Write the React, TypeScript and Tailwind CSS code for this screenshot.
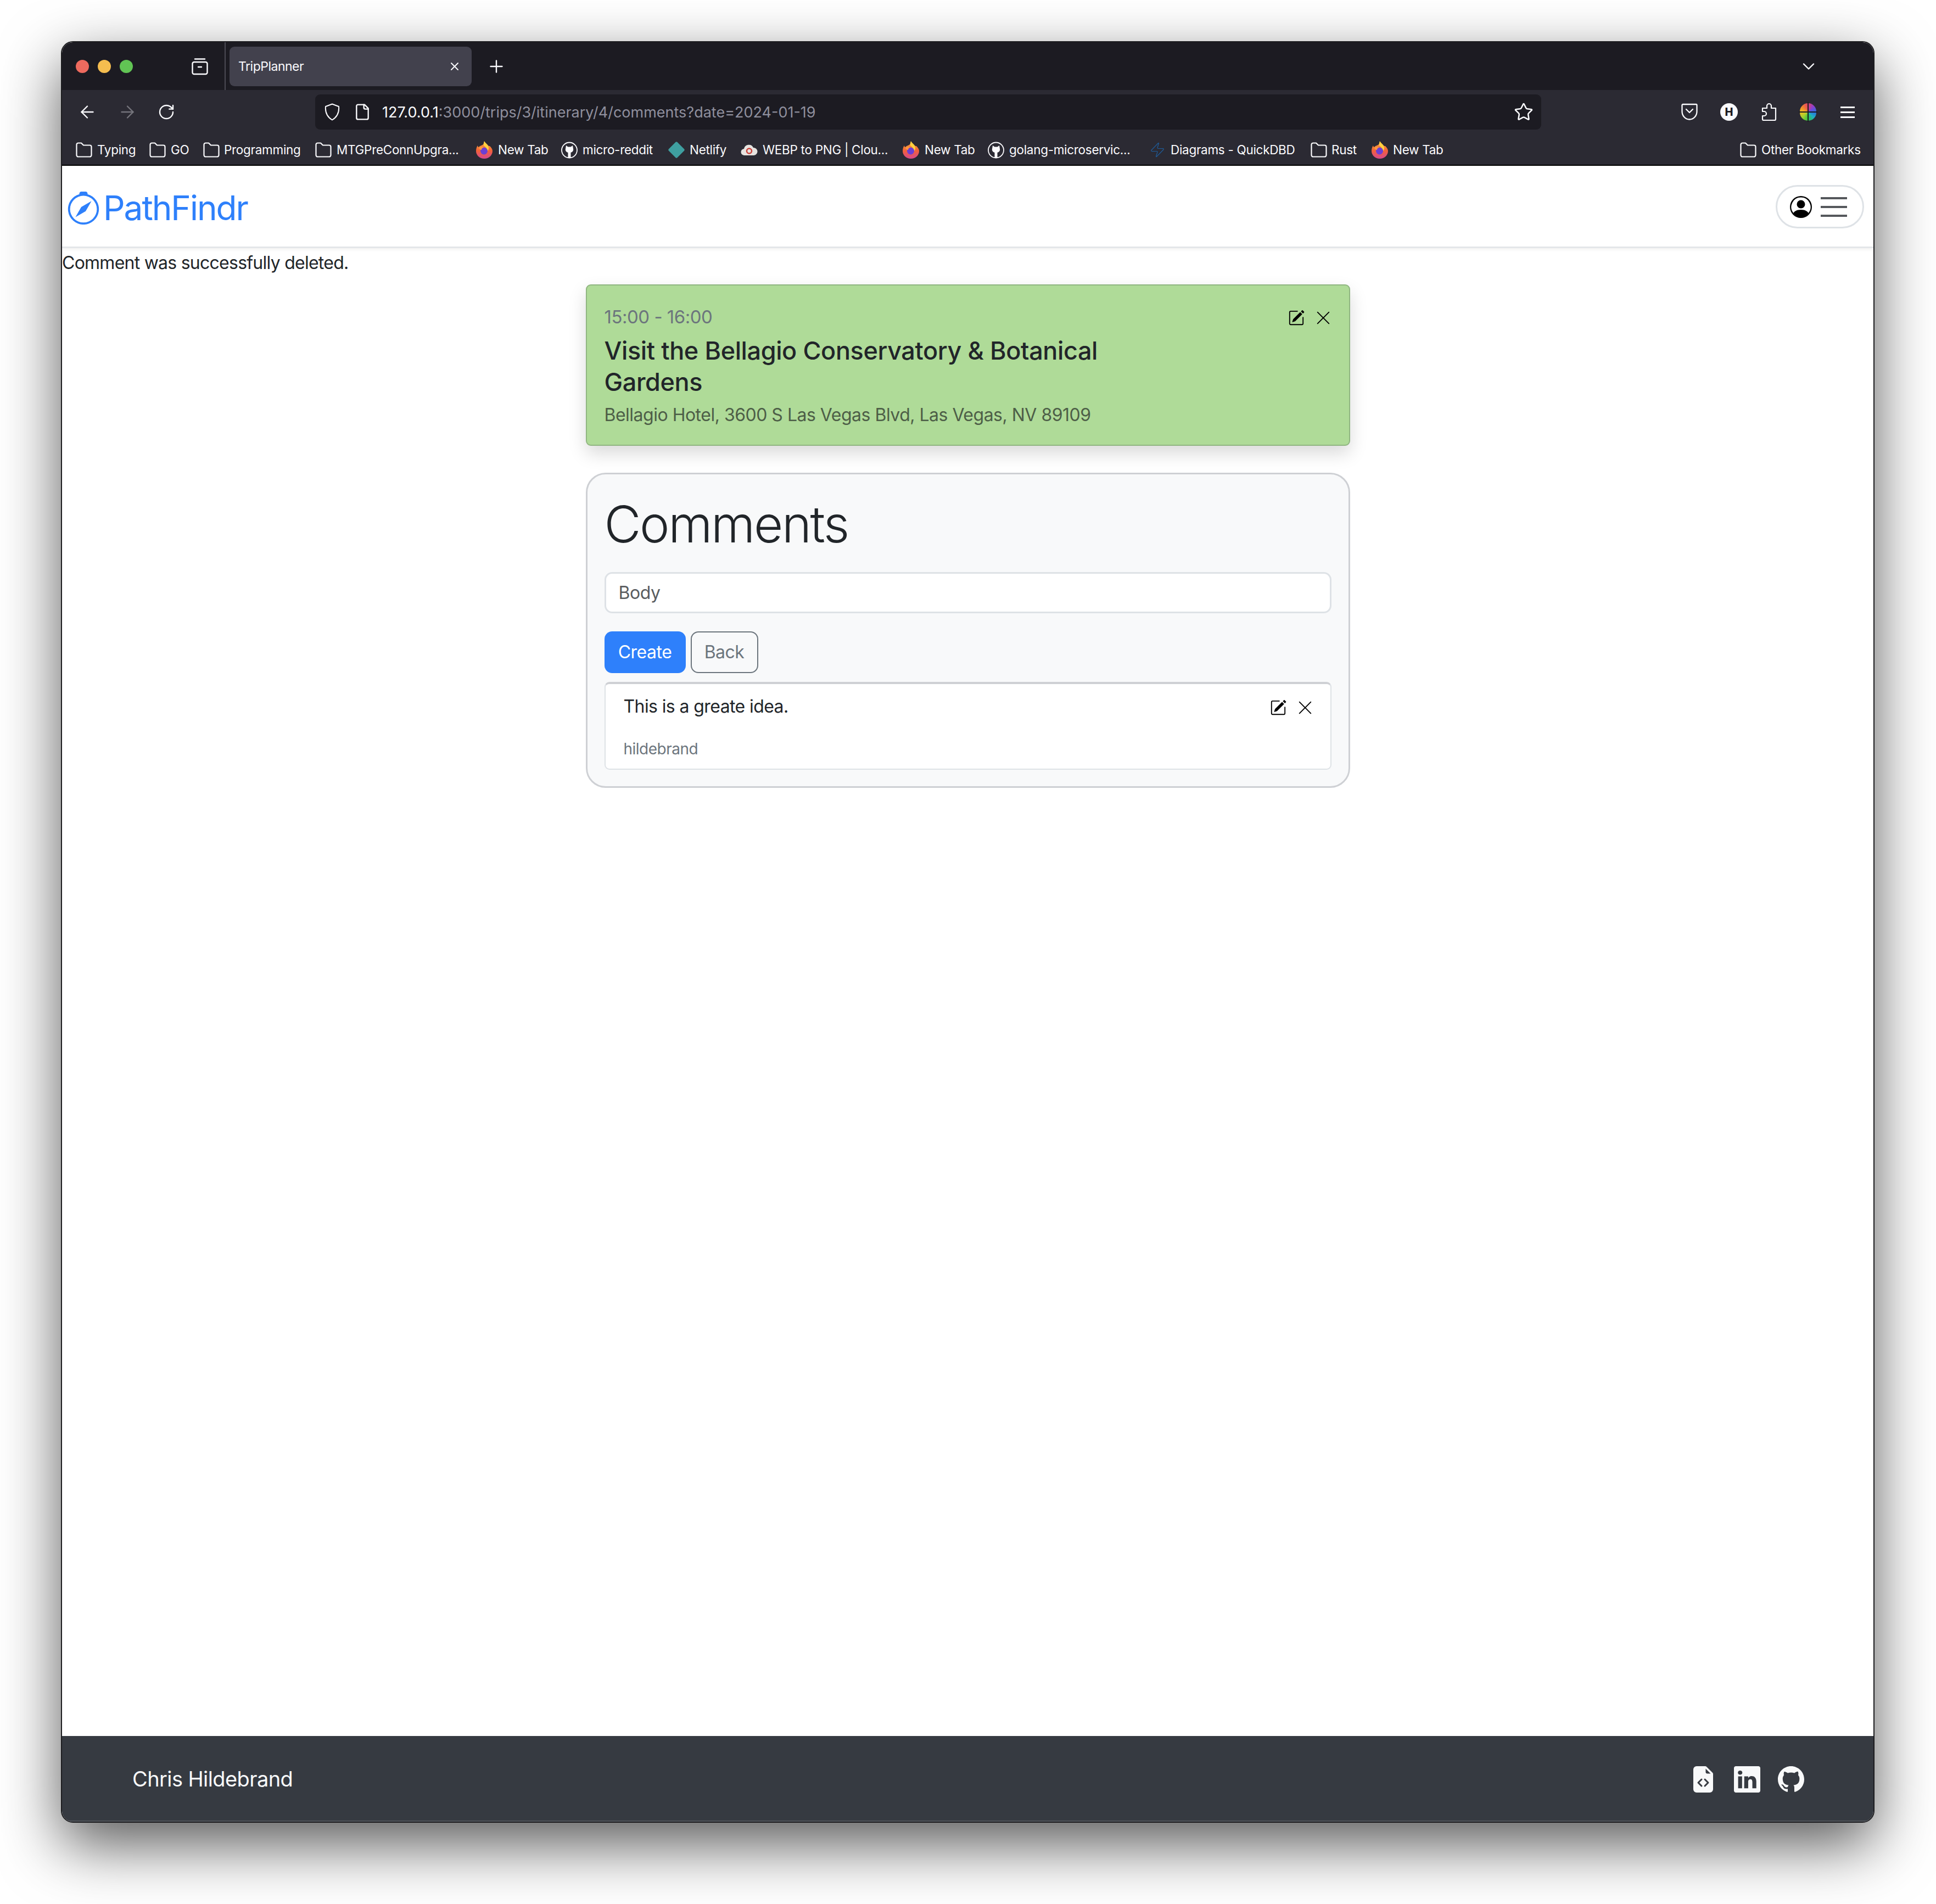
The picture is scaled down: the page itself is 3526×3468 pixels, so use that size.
import React from 'react';
import { BsCompass, BsPencilSquare, BsXLg, BsPersonCircle, BsFileEarmarkCodeFill, BsLinkedin, BsGithub } from 'react-icons/bs';
import { LuArrowLeft, LuArrowRight, LuRotateCw, LuStar, LuZap, LuFile, LuChevronDown, LuPlus, LuX } from 'react-icons/lu';

const Folder = () => (
  <svg width="30" height="28" viewBox="0 0 30 28" fill="none" stroke="#fbfbfe" strokeWidth="2.2" strokeLinejoin="round">
    <path d="M1.5 4.5a3 3 0 0 1 3-3h5.5l4 4h11.5a3 3 0 0 1 3 3v15a3 3 0 0 1-3 3h-21a3 3 0 0 1-3-3z" />
  </svg>
);

const FirefoxIcon = () => (
  <svg width="32" height="32" viewBox="0 0 32 32">
    <defs>
      <linearGradient id="ffBody" x1="0" y1="0" x2="0" y2="1">
        <stop offset="0" stopColor="#ffb03a" />
        <stop offset="0.55" stopColor="#f2613a" />
        <stop offset="1" stopColor="#d6478f" />
      </linearGradient>
    </defs>
    <path d="M16 0c1 3 5 5 7 8 1 1 2 1 3 1 3 3 5 6 5 9a15 14 0 0 1-30 0c0-4 1-7 3-10 0 2 1 3 2 3 2-3 6-3 8-5 1-2 2-4 2-6z" fill="url(#ffBody)" />
    <path d="M16 0c1 3 5 5 7 9 2 4 1 7-1 9-1-5-4-8-7-10 0-3 0-5 1-8z" fill="#ffd23f" />
    <circle cx="15.5" cy="18" r="6.5" fill="#6b3fd4" />
    <path d="M6 12c3-2 7-2 9 0-3 0-4 2-4 4-2 0-4-1-5-4z" fill="#ff9a3c" />
  </svg>
);

const GithubBookmark = () => (
  <svg width="30" height="31" viewBox="0 0 30 31" fill="none">
    <circle cx="15" cy="15.500" r="14" stroke="#fbfbfe" strokeWidth="1.800" />
    <path d="M9 7l3.500 2.500h5L21 7l1 6c.8 3.500-1.500 6-4.500 6.800V30h-5V19.800C9.500 19 7.200 16.500 8 13z" fill="#fbfbfe" />
  </svg>
);

const NetlifyIcon = () => <div className="w-[22px] h-[22px] rotate-45 mx-[4px] bg-[#3f9fa0] rounded-[2px]" />;

const CloudIcon = () => (
  <svg width="31" height="22" viewBox="0 0 31 22">
    <path d="M7 21a6 6 0 0 1-1-12 9 9 0 0 1 17-2 7 7 0 0 1 1 14z" fill="#e6e3e0" />
    <circle cx="15.5" cy="13" r="4.5" fill="none" stroke="#c9413a" strokeWidth="2.5" />
  </svg>
);

const QuickIcon = () => <LuZap size={30} color="#1f5a96" strokeWidth={1} className="mx-[-4px]" />;

type Mark = { icon: React.ReactNode; label: string; w: string; ml: string; gap: string };

const marks: Mark[] = [
  { icon: <Folder />, label: 'Typing', w: 'w-[68px]', ml: 'ml-[25px]', gap: 'gap-[9px]' },
  { icon: <Folder />, label: 'GO', w: 'w-[32px]', ml: 'ml-[27px]', gap: 'gap-[9px]' },
  { icon: <Folder />, label: 'Programming', w: 'w-[139px]', ml: 'ml-[27px]', gap: 'gap-[8px]' },
  { icon: <Folder />, label: 'MTGPreConnUpgra...', w: 'w-[220px]', ml: 'ml-[27px]', gap: 'gap-[9px]' },
  { icon: <FirefoxIcon />, label: 'New Tab', w: 'w-[89px]', ml: 'ml-[33px]', gap: 'gap-[9px]' },
  { icon: <GithubBookmark />, label: 'micro-reddit', w: 'w-[130px]', ml: 'ml-[26px]', gap: 'gap-[9px]' },
  { icon: <NetlifyIcon />, label: 'Netlify', w: 'w-[67px]', ml: 'ml-[26px]', gap: 'gap-[9px]' },
  { icon: <CloudIcon />, label: 'WEBP to PNG | Clou...', w: 'w-[226px]', ml: 'ml-[26px]', gap: 'gap-[9px]' },
  { icon: <FirefoxIcon />, label: 'New Tab', w: 'w-[89px]', ml: 'ml-[28px]', gap: 'gap-[9px]' },
  { icon: <GithubBookmark />, label: 'golang-microservic...', w: 'w-[220px]', ml: 'ml-[26px]', gap: 'gap-[9px]' },
  { icon: <QuickIcon />, label: 'Diagrams - QuickDBD', w: 'w-[228px]', ml: 'ml-[39px]', gap: 'gap-[13px]' },
  { icon: <Folder />, label: 'Rust', w: 'w-[46px]', ml: 'ml-[27px]', gap: 'gap-[8px]' },
  { icon: <FirefoxIcon />, label: 'New Tab', w: 'w-[89px]', ml: 'ml-[26px]', gap: 'gap-[8px]' },
];

const BookmarkBar = () => (
  <div className="h-[66px] shrink-0 bg-[#2b2a33] border-b-2 border-black pt-[10px] flex items-center text-[22.5px] tracking-[-0.3px] text-[#fbfbfe]">
    {marks.map((m, i) => (
      <div key={i} className={`flex items-center ${m.ml} ${m.gap}`}>
        {m.icon}
        <span className={`${m.w} whitespace-nowrap`}>{m.label}</span>
      </div>
    ))}
    <div className="ml-auto mr-[23px] flex items-center gap-[9px]">
      <Folder />
      <span className="w-[181px] whitespace-nowrap">Other Bookmarks</span>
    </div>
  </div>
);

const TabStrip = () => (
  <div className="h-[87px] shrink-0 bg-[#1c1b22] flex items-center">
    <div className="ml-[25px] flex gap-[16px]">
      <div className="w-[24px] h-[24px] rounded-full bg-[#ee6a5e]" />
      <div className="w-[24px] h-[24px] rounded-full bg-[#f5bd4f]" />
      <div className="w-[24px] h-[24px] rounded-full bg-[#61c454]" />
    </div>
    <svg className="ml-[106px]" width="32" height="32" viewBox="0 0 32 32" fill="none" stroke="#fbfbfe" strokeWidth="2.4" strokeLinecap="round">
      <path d="M7 2.5h18" />
      <rect x="2.5" y="8" width="27" height="22" rx="3" />
      <path d="M13 17h6" />
    </svg>
    <div className="ml-[29px] w-[2px] self-stretch bg-[#4b4a54]" />
    <div className="ml-[7px] w-[441px] h-[72px] rounded-[9px] bg-[#42414d] flex items-center justify-between pl-[16px] pr-[19px] text-[23px] tracking-[-0.5px] text-[#fbfbfe]">
      <span className="pt-[2px]">TripPlanner</span>
      <LuX size={24} strokeWidth={2} />
    </div>
    <LuPlus className="ml-[27px]" size={36} color="#fbfbfe" strokeWidth={1.6} />
    <LuChevronDown className="ml-auto mr-[100px]" size={36} color="#fbfbfe" strokeWidth={1.6} />
  </div>
);

const ColorWheel = () => (
  <div className="relative ml-[41px] w-[30px] h-[32px] rounded-full bg-[conic-gradient(#e0406a,#8a3fd0,#2a6fe0,#20b0c0,#30c040,#a0d030,#f0c020,#f08030,#e0406a)]">
    <div className="absolute left-[14px] top-[-2px] w-[2px] h-[36px] bg-[#1c1b22]" />
    <div className="absolute left-[-2px] top-[15px] w-[34px] h-[2px] bg-[#1c1b22]" />
  </div>
);

const ToolBar = () => (
  <div className="h-[72px] shrink-0 bg-[#2b2a33] pt-[8px] flex items-center text-[#fbfbfe]">
    <LuArrowLeft className="ml-[28px]" size={36} strokeWidth={1.6} />
    <LuArrowRight className="ml-[37px] text-[#75747c]" size={36} strokeWidth={1.6} />
    <LuRotateCw className="ml-[37px]" size={32} strokeWidth={1.8} />
    <div className="ml-[255px] w-[2233px] h-[64px] rounded-[9px] bg-[#1c1b22] flex items-center text-[27px]">
      <svg className="ml-[17px]" width="28" height="32" viewBox="0 0 28 32" fill="none" stroke="#fbfbfe" strokeWidth="2" strokeLinejoin="round">
        <path d="M14 1.500L26 6c1 11-3 19-12 24.500C5 25 1 17 2 6z" />
      </svg>
      <LuFile className="ml-[25px]" size={32} strokeWidth={1.8} />
      <span className="ml-[20px] pt-[2px] whitespace-nowrap">
        127.0.0.1<span className="text-[#8f8f9d]">:3000/trips/3/itinerary/4/comments?date=2024-01-19</span>
      </span>
      <LuStar className="ml-auto mr-[14px]" size={36} strokeWidth={1.7} />
    </div>
    <svg className="ml-[255px]" width="30" height="32" viewBox="0 0 30 32" fill="none" stroke="#fbfbfe" strokeWidth="2.3" strokeLinecap="round" strokeLinejoin="round">
      <path d="M3 2h24a1.5 1.5 0 0 1 1.5 1.5V15a13.5 14.5 0 0 1-27 0V3.500A1.500 1.500 0 0 1 3 2z" />
      <path d="M9 11l6 6 6-6" />
    </svg>
    <div className="ml-[41px] w-[32px] h-[32px] rounded-full bg-[#fbfbfe] text-[#1c1b22] flex items-center justify-center text-[20px] font-extrabold">H</div>
    <svg className="ml-[42px]" width="30" height="34" viewBox="0 0 30 34" fill="none" stroke="#fbfbfe" strokeWidth="2.2" strokeLinejoin="round">
      <path d="M3 10h8V6a4 4 0 0 1 8 0v4h8v20a2 2 0 0 1-2 2H5a2 2 0 0 1-2-2v-6h3a4 4 0 0 0 0-8H3z" />
    </svg>
    <ColorWheel />
    <div className="ml-[44px] w-[26px] flex flex-col gap-[6px]">
      <div className="h-[3px] bg-[#fbfbfe]" />
      <div className="h-[3px] bg-[#fbfbfe]" />
      <div className="h-[3px] bg-[#fbfbfe]" />
    </div>
  </div>
);

const NavBar = () => (
  <nav className="relative z-10 h-[150px] shrink-0 bg-white border-b-[3px] border-[#e4e6e9] shadow-[0_3px_6px_rgba(0,0,0,0.05)] flex items-center justify-between">
    <div className="ml-[9px] mt-[6px] flex items-center text-[#2e80fb]">
      <BsCompass size={60} />
      <span className="ml-[6px] text-[62px] leading-none tracking-[-2px]">PathFindr</span>
    </div>
    <button className="mr-[17px] mt-[2px] w-[161px] h-[79px] rounded-full border-[3px] border-[#dee2e6] flex items-center pl-[23px] gap-[16px]">
      <BsPersonCircle size={40} color="#000" />
      <div className="w-[48px] flex flex-col gap-[12px]">
        <div className="h-[4px] bg-[#55585c]" />
        <div className="h-[4px] bg-[#55585c]" />
        <div className="h-[4px] bg-[#55585c]" />
      </div>
    </button>
  </nav>
);

const Actions = () => (
  <div className="flex items-center self-start gap-[19px] text-black shrink-0 mt-[14px] mr-[-2px]">
    <BsPencilSquare size={30} />
    <BsXLg size={30} />
  </div>
);

const ActivityCard = () => (
  <div className="mt-[12px] mx-auto w-[1392px] rounded-[9px] border-2 border-[#90b681] bg-[#afdb98] shadow-[0_14px_32px_rgba(0,0,0,0.15)] pl-[32px] pr-[34px] pt-[30px] pb-[27px] flex justify-between">
    <div>
      <p className="text-[33px] leading-[54px] tracking-[-0.5px] text-[#6c757d]">15:00 - 16:00</p>
      <h5 className="mt-[6px] text-[45px] leading-[57px] tracking-[-0.4px] font-medium text-[#212529]">
        Visit the Bellagio Conservatory &amp; Botanical<br />Gardens
      </h5>
      <p className="mt-[5px] text-[32px] leading-[54px] tracking-[-0.5px] text-[#4d5e47]">Bellagio Hotel, 3600 S Las Vegas Blvd, Las Vegas, NV 89109</p>
    </div>
    <Actions />
  </div>
);

const CommentsCard = () => (
  <div className="mt-[49px] mx-auto w-[1392px] rounded-[36px] border-[3px] border-[#ced0d4] bg-[#f8f9fa] px-[31px] pt-[37px] pb-[30px]">
    <h1 className="text-[92px] leading-[108px] tracking-[-2.400px] font-light text-[#212529]">Comments</h1>
    <div className="mt-[33px] h-[75px] rounded-[14px] border-[3px] border-[#dee2e6] bg-white flex items-center pl-[23px] text-[32px] tracking-[-0.5px] text-[#595c5f]">Body</div>
    <div className="mt-[33px] flex gap-[9px] text-[32px] tracking-[-0.5px]">
      <button className="w-[148px] h-[76px] rounded-[14px] bg-[#2e80fb] text-white">Create</button>
      <button className="w-[123px] h-[76px] rounded-[14px] border-2 border-[#6c757d] text-[#6c757d]">Back</button>
    </div>
    <div className="mt-[16px] rounded-[9px] border-2 border-t-[4px] border-[#dee2e6] border-t-[#ced0d4] bg-white px-[33px] pt-[14px] pb-[15px]">
      <div className="flex justify-between">
        <p className="text-[32px] leading-[54px] tracking-[-0.6px] text-[#212529]">This is a greate idea.</p>
        <Actions />
      </div>
      <p className="mt-[29px] text-[28px] leading-[42px] tracking-[-0.5px] text-[#6c757d]">hildebrand</p>
    </div>
  </div>
);

const Footer = () => (
  <footer className="h-[156px] shrink-0 bg-[#363a41] border-b-2 border-[#54585e] pt-[3px] flex items-center justify-between">
    <span className="ml-[128px] text-[38px] tracking-[-0.6px] text-[#f8f9fa]">Chris Hildebrand</span>
    <div className="mr-[126px] flex items-center text-[#f8f9fa]">
      <BsFileEarmarkCodeFill size={48} />
      <BsLinkedin className="ml-[32px]" size={48} />
      <BsGithub className="ml-[32px]" size={48} />
    </div>
  </footer>
);

export default function App() {
  return (
    <div className="w-[3526px] h-[3468px] bg-white pl-[111px] pt-[75px] font-['Inter',sans-serif]">
      <div className="w-[3303px] h-[3245px] rounded-[22px] border-2 border-[#1c1c1f] overflow-hidden flex flex-col bg-white shadow-[0_40px_110px_rgba(0,0,0,0.65)]">
        <TabStrip />
        <ToolBar />
        <BookmarkBar />
        <NavBar />
        <main className="flex-1 flex flex-col">
          <p className="text-[32px] leading-[54px] tracking-[-0.75px] text-[#212529]">Comment was successfully deleted.</p>
          <ActivityCard />
          <CommentsCard />
        </main>
        <Footer />
      </div>
    </div>
  );
}
